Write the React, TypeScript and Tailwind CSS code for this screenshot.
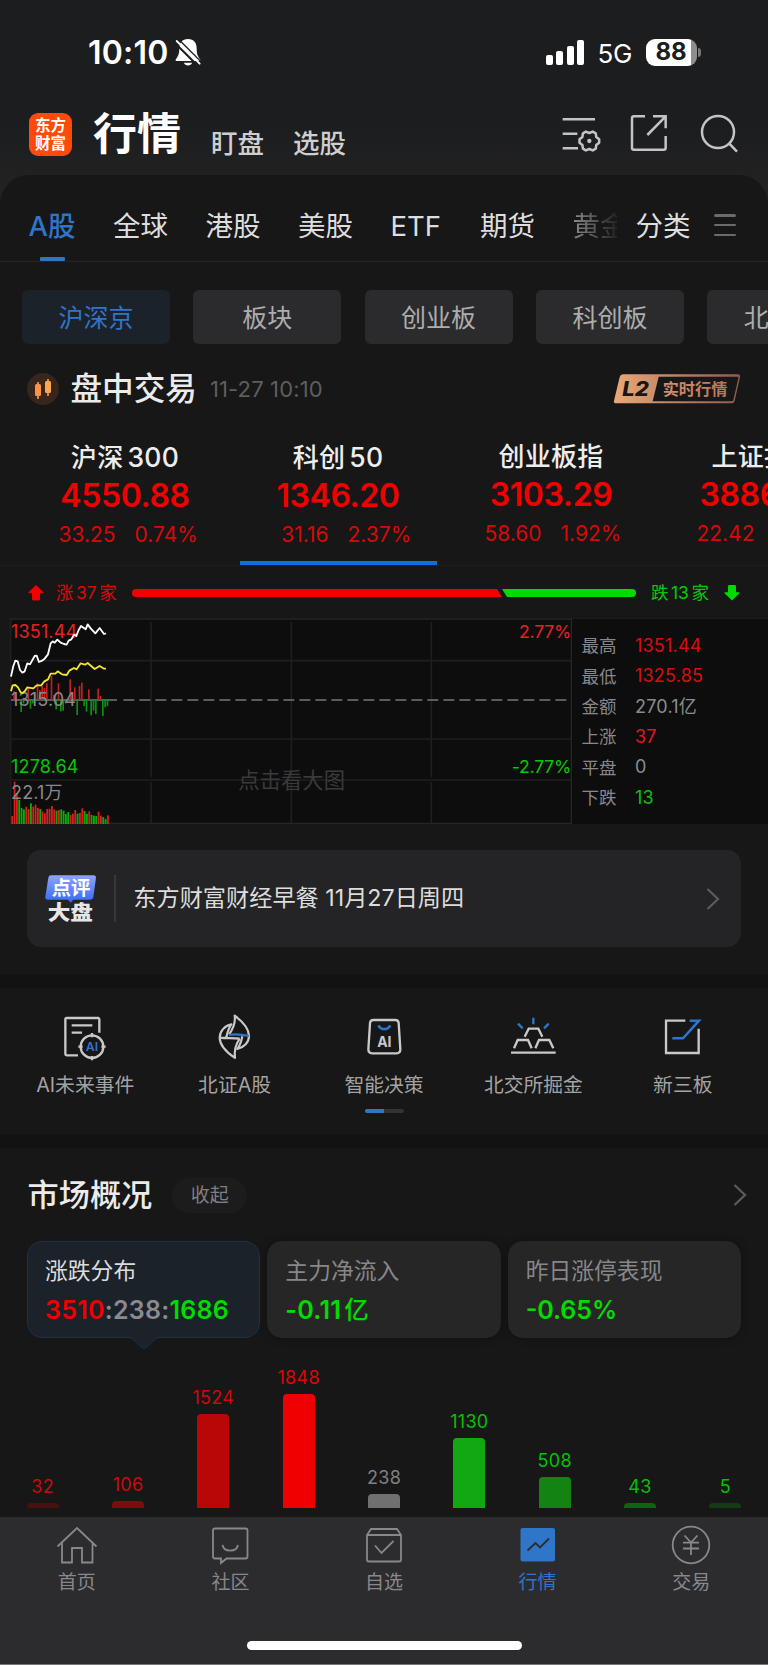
import React from 'react';
import { clsx } from 'clsx';

const tabs = ['全球', '港股', '美股', 'ETF', '期货'];

const boards = ['沪深京', '板块', '创业板', '科创板', '北交所'];

const indices = [
  { name: '沪深', num: '300', value: '4550.88', change: '33.25', pct: '0.74%' },
  { name: '科创', num: '50', value: '1346.20', change: '31.16', pct: '2.37%' },
  { name: '创业板指', num: '', value: '3103.29', change: '58.60', pct: '1.92%' },
  { name: '上证指数', num: '', value: '3886.60', change: '22.42', pct: '0.58%' },
];

const stats = [
  { label: '最高', value: '1351.44', color: 'text-[#d90d0d]' },
  { label: '最低', value: '1325.85', color: 'text-[#d90d0d]' },
  { label: '金额', value: '270.1亿', color: 'text-[#8b8b90]' },
  { label: '上涨', value: '37', color: 'text-[#e01818]' },
  { label: '平盘', value: '0', color: 'text-[#8b8b90]' },
  { label: '下跌', value: '13', color: 'text-[#06c406]' },
];

const distribution = [
  { count: 32, height: 5, bar: 'bg-[#4a1010]', text: 'text-[#cd0a0a]' },
  { count: 106, height: 7, bar: 'bg-[#7d0c0c]', text: 'text-[#cd0a0a]' },
  { count: 1524, height: 94, bar: 'bg-[#b90606]', text: 'text-[#cd0a0a]' },
  { count: 1848, height: 114, bar: 'bg-[#f00000]', text: 'text-[#dc0606]' },
  { count: 238, height: 14, bar: 'bg-[#707070]', text: 'text-[#808085]' },
  { count: 1130, height: 70, bar: 'bg-[#12a812]', text: 'text-[#06c006]' },
  { count: 508, height: 31, bar: 'bg-[#138413]', text: 'text-[#06c006]' },
  { count: 43, height: 5, bar: 'bg-[#146014]', text: 'text-[#06c006]' },
  { count: 5, height: 5, bar: 'bg-[#153b15]', text: 'text-[#06c006]' },
];

// [x, height], positive is up and negative is down
const momentum = [
  [42, 26], [63, -36], [70, -10], [84, 34], [91, -26], [98, -10], [105, 22], [112, 50], [119, 30], [126, 42],
  [133, 36], [140, 50], [154, 72], [161, 15], [168, -28], [175, 50], [182, -34], [189, -32], [196, -10],
  [210, 62], [217, 22], [224, 38], [231, -45], [238, 42], [245, 52], [252, -18], [259, -35], [266, 32],
  [273, -46], [280, -32], [287, -42], [294, 34], [301, 12], [308, -48], [315, -22], [322, -18],
];

const volumes = [
  24, 127, 92, -72, -48, -44, 52, 45, -62, 52, 58, 48, -45, 37, 32, 45, 46, 54, 44, -40, 42,
  -44, -40, -30, -36, 27, 31, 42, -31, 33, 47, -39, -30, 38, -27, -25, -24, 37, 25, -21, -15, 26,
];

const priceLine =
  '33,200 40,168 46,152 53,154 60,180 67,188 74,184 82,160 90,163 104,138 110,137 117,156 126,152 134,146 144,133 152,100 158,94 164,98 172,89 182,98 192,102 200,104 206,92 214,88 222,74 229,78 236,60 243,48 257,58 263,43 272,55 286,70 299,54 312,72 318,70';

const averageLine =
  '33,244 38,226 46,225 54,232 62,247 68,249 75,243 82,232 100,235 110,226 124,226 132,215 144,208 152,191 166,191 173,184 186,193 200,195 208,182 222,174 230,178 242,160 255,164 263,159 284,177 299,168 312,176 318,176';

const StatusBar = () => (
  <div className="flex h-[104px] items-center pl-[88px] pr-[67px]">
    <span className="w-[80px] pt-[2px] text-[32px] font-semibold leading-none tracking-[0.2px] text-white">10:10</span>
    <svg viewBox="0 0 84 92" className="ml-[6px] h-[30.7px] w-[28px]">
      <path
        d="M42 6C24 6 16 18 16 34c0 18-4 24-11 34q-2 4 3 4h68q5 0 3-4C71 58 68 52 68 34 68 18 60 6 42 6ZM30 77h24c-2 11-22 11-24 0Z"
        fill="#fff"
      />
      <path d="M2 17 72 87" stroke="#1c1d1f" strokeWidth="6" />
      <path d="M13 6 83 76" stroke="#1c1d1f" strokeWidth="4" />
      <path d="M8 12 77 80" stroke="#fff" strokeWidth="5.5" strokeLinecap="round" />
    </svg>
    <div className="ml-auto flex items-center">
      <div className="flex h-[25px] w-[39px] items-end justify-between">
        <i className="h-[10px] w-[7px] rounded-[2px] bg-white" />
        <i className="h-[14px] w-[7px] rounded-[2px] bg-white" />
        <i className="h-[19px] w-[7px] rounded-[2px] bg-white" />
        <i className="h-[25px] w-[7px] rounded-[2px] bg-white" />
      </div>
      <span className="ml-[13px] w-[35px] pt-[3px] text-[26px] leading-none tracking-[-0.3px] text-white">5G</span>
      <div className="ml-[13px] flex h-[27px] w-[51px] items-center justify-center rounded-[9px] bg-[linear-gradient(90deg,#fff_88%,#8e8e8f_88%)]">
        <span className="text-[24px] font-bold leading-none text-[#1c1d1f]">88</span>
      </div>
      <i className="ml-[1.5px] h-[9px] w-[3px] rounded-r-full bg-[#77787a]" />
    </div>
  </div>
);

const Header = () => (
  <div className="flex h-[71px] items-start pl-[29px] pr-[30px]">
    <div className="mt-[9px] flex h-[43px] w-[43px] flex-col items-center justify-center rounded-[9px] bg-[#ff4a08] text-[15.5px] font-bold leading-[17.5px] text-white">
      <span>东方</span>
      <span>财富</span>
    </div>
    <h1 className="ml-[21px] mt-[8px] text-[44px] font-bold leading-[44px] text-white">行情</h1>
    <span className="ml-[30px] mt-[26px] text-[26.5px] font-medium leading-[26px] text-[#cfcfcf]">盯盘</span>
    <span className="ml-[29px] mt-[26px] text-[26.5px] font-medium leading-[26px] text-[#cfcfcf]">选股</span>
    <div className="ml-auto mt-[9px] flex">
      <svg viewBox="0 0 120 120" className="h-[40px] w-[40px]" fill="none" stroke="#c4c4c4" strokeWidth="7.5">
        <path d="M5 19h97M5 62h44M5 106h46" />
        <path
          strokeLinejoin="round"
          d="M114.5 78.8v10.4L105.8 96l-1.5 11-9 5.2L85 108l-10.3 4.2-9-5.2-1.5-11-8.7-6.8V78.8l8.7-6.8 1.5-11 9-5.2L85 60l10.3-4.2 9 5.2 1.5 11Z"
        />
        <circle cx="85" cy="84" r="6.5" fill="#c4c4c4" stroke="none" />
      </svg>
      <svg viewBox="0 0 120 120" className="ml-[28px] h-[40px] w-[40px]" fill="none" stroke="#c4c4c4" strokeWidth="7.5">
        <path d="M48 10H15q-6 0-6 6v88q0 6 6 6h89q6 0 6-6V69" />
        <path d="M72 10h38v36M110 10 55 66" />
      </svg>
      <svg viewBox="0 0 120 120" className="ml-[29px] mr-[0.5px] h-[40px] w-[40px]" fill="none" stroke="#c4c4c4" strokeWidth="7.5">
        <circle cx="60" cy="57" r="48" />
        <path d="m94 92 23 24" />
      </svg>
    </div>
  </div>
);

const MarketTabs = () => (
  <div className="flex h-[87px] items-start border-b border-[#242424] pl-[28.5px] pr-[32px] pt-[37px] text-[27.5px] leading-[28px] text-[#dedede]">
    <div className="flex w-[47px] flex-col items-center whitespace-nowrap font-medium text-[#2f75c8]">
      A股
      <i className="mt-[17px] h-[4px] w-[25px] rounded-[1px] bg-[#2f75c8]" />
    </div>
    {tabs.map((tab) => (
      <span key={tab} className={clsx('ml-[37.5px] shrink-0', tab === 'ETF' && 'w-[52px]')}>
        {tab}
      </span>
    ))}
    <span className="ml-[37.5px] w-[44px] overflow-hidden whitespace-nowrap bg-gradient-to-r from-[#8c8c8c] to-[#242424] bg-clip-text text-transparent">
      黄金
    </span>
    <span className="ml-[19px] shrink-0">分类</span>
    <div className="ml-auto mt-[2px] flex h-[22px] w-[22px] flex-col justify-between">
      <i className="h-[2.5px] rounded bg-[#6b6b6b]" />
      <i className="h-[2.5px] rounded bg-[#6b6b6b]" />
      <i className="h-[2.5px] rounded bg-[#6b6b6b]" />
    </div>
  </div>
);

const LevelBadge = () => (
  <svg viewBox="0 0 386 95" className="ml-auto h-[31.7px] w-[128.7px]">
    <defs>
      <linearGradient id="copper" x1="0" x2="1">
        <stop offset="0" stopColor="#eaa878" />
        <stop offset="1" stopColor="#8f5a4c" />
      </linearGradient>
      <linearGradient id="copperText" x1="0" x2="1">
        <stop offset="0" stopColor="#d3906d" />
        <stop offset="1" stopColor="#b57560" />
      </linearGradient>
    </defs>
    <path d="M30 4h344q9 0 7 8l-16 71q-2 8-10 8H10q-9 0-7-8l17-71q2-8 10-8Z" fill="url(#copper)" />
    <path d="M137 11h236q4 0 3 4l-15 66q-1 4-5 4H119Z" fill="#171717" />
    <text x="28" y="70" textLength="80" lengthAdjust="spacingAndGlyphs" fontSize="59" fontWeight="800" fontStyle="italic" fill="#171717">
      L2
    </text>
    <text x="149" y="65" fontSize="48.5" fontWeight="700" fill="url(#copperText)">
      实时行情
    </text>
  </svg>
);

const IndexStrip = () => (
  <div className="flex h-[148px] overflow-hidden border-b border-[#1e1e1e] pl-[18.5px]">
    {indices.map((item, i) => (
      <div key={item.value} className="relative flex w-[213px] shrink-0 flex-col items-center whitespace-nowrap">
        <div className="mt-[26px] text-[26px] font-medium leading-[26px] tracking-[0.3px] text-[#ededed]">
          {item.name}
          {item.num && <span className="ml-[4px] text-[26.5px]">{item.num}</span>}
        </div>
        <div className="mt-[9px] text-[32px] font-semibold leading-[32px] tracking-[-0.4px] text-[#f20000]">{item.value}</div>
        <div className="mt-[12px] grid w-full grid-cols-2 gap-[19px] text-[21px] leading-[22px] text-[#d60909]">
          <span className="text-right">{item.change}</span>
          <span>{item.pct}</span>
        </div>
        {i === 1 && <i className="absolute bottom-0 h-[4px] w-[197px] bg-[#0873dd]" />}
      </div>
    ))}
  </div>
);

const Breadth = () => (
  <div className="flex h-[52px] items-center pl-[28px] pr-[28px] pt-[1px] text-[17.5px] leading-none">
    <svg viewBox="0 0 16 16" className="h-[16px] w-[16px]" fill="#f20000">
      <path d="M8 0l7.5 7.3q.6 1-.6 1H12V14q0 1.400-1.400 1.400H5.400Q4 15.400 4 14V8.300H1.100q-1.200 0-.6-1Z" />
    </svg>
    <span className="ml-[12px] w-[64px] whitespace-nowrap text-[#dc0808]">
      涨<span className="mx-[2.5px]">37</span>家
    </span>
    <svg viewBox="0 0 504 8" className="ml-[12px] h-[8px] w-[504px]">
      <path d="M4 0h361l5 8H4a4 4 0 0 1 0-8Z" fill="#f20000" />
      <path d="M370 0h130a4 4 0 0 1 0 8H375Z" fill="#00dc00" />
    </svg>
    <span className="ml-[15px] whitespace-nowrap text-[#06c806]">
      跌<span className="mx-[2.5px]">13</span>家
    </span>
    <svg viewBox="0 0 16 16" className="ml-auto h-[16px] w-[16px]" fill="#00dc00">
      <path d="M8 15.500l7.500-7.300q.6-1-.6-1H12V1.400Q12 0 10.600 0H5.400Q4 0 4 1.400V7.200H1.100q-1.200 0-.6 1Z" />
    </svg>
  </div>
);

const IntradayChart = () => (
  <div className="flex h-[206px] pl-[10px]">
    <svg viewBox="30 24 1686 618" className="h-[206px] w-[562px] bg-[#0d0d0d]">
      <path d="M32 24v618M453 36v466M453 516v126M874 36v466M874 516v126M1294 36v466M1294 516v126" stroke="#1f1f1f" strokeWidth="5" />
      <path d="M30 152h1686M30 387h1686M30 510h1686" stroke="#1f1f1f" strokeWidth="5" />
      <path d="M30 27h1684v613H30" fill="none" stroke="#262626" strokeWidth="4" />
      <path d="M33 270h318" stroke="#77777a" strokeWidth="4" />
      <path d="M370 270h1340" stroke="#77777a" strokeWidth="4" strokeDasharray="33 15" />
      {momentum.map(([x, h]) => (
        <rect key={x} x={x - 2} y={h > 0 ? 270 - h : 270} width="5" height={Math.abs(h)} fill={h > 0 ? '#c02020' : '#0f8f0f'} />
      ))}
      {volumes.map((h, i) => (
        <rect key={i} x={34 + i * 7} y={642 - Math.abs(h)} width="5.5" height={Math.abs(h)} fill={h > 0 ? '#d42020' : '#05b005'} />
      ))}
      <g fontSize="54" letterSpacing="0.5">
        <text x="33" y="83" fill="#e52222">1351.44</text>
        <text x="33" y="287" fill="#88888c">1315.04</text>
        <text x="33" y="490" fill="#06c806">1278.64</text>
        <text x="33" y="568" fill="#88888c">22.1万</text>
      </g>
      <g fontSize="53" letterSpacing="-0.8" textAnchor="end">
        <text x="1713" y="83" fill="#e52222">2.77%</text>
        <text x="1713" y="490" fill="#06c806">-2.77%</text>
      </g>
      <text x="715" y="533" fontSize="64" fill="#3a3a3a">点击看大图</text>
      <polyline points={priceLine} fill="none" stroke="#fff" strokeWidth="5.5" strokeLinejoin="round" />
      <polyline points={averageLine} fill="none" stroke="#f2e530" strokeWidth="5.5" strokeLinejoin="round" />
    </svg>
    <div className="flex flex-1 flex-col border-t border-[#1c1c1c] bg-[#0d0d0d] pl-[9.5px] pt-[12px] text-[18px]">
      {stats.map((row) => (
        <div key={row.label} className="flex h-[30.3px] items-center leading-none">
          <span className="w-[53.5px] text-[17.5px] text-[#87878c]">{row.label}</span>
          <span className={clsx('tracking-[0.2px]', row.color)}>{row.value}</span>
        </div>
      ))}
    </div>
  </div>
);

const Chevron = ({ className }: { className?: string }) => (
  <svg viewBox="0 0 14 24" className={clsx('h-[24px] w-[14px]', className)} fill="none" stroke="#5c5c5e" strokeWidth="2.2">
    <path d="M1.500 2l10.500 10L1.500 22" />
  </svg>
);

const NewsCard = () => (
  <div className="mx-[27px] mt-[26px] flex h-[97px] items-center rounded-[14px] bg-[#242426] pl-[17px] pr-[21px]">
    <svg viewBox="0 0 160 155" className="h-[51.7px] w-[53.3px]">
      <defs>
        <linearGradient id="review" x1="0" x2="0" y1="0" y2="1">
          <stop offset="0" stopColor="#8fa4f8" />
          <stop offset="1" stopColor="#3468ff" />
        </linearGradient>
      </defs>
      <path d="M22 7h126q9 0 8 8l-8 58q-1 7-9 7H88l-8 9-8-9H12q-9 0-8-8l9-58q1-7 9-7Z" fill="url(#review)" />
      <text x="23" y="65" fontSize="58" fontWeight="700" fill="#fff">点评</text>
      <text x="11" y="142" fontSize="60" fontWeight="900" textLength="136" lengthAdjust="spacingAndGlyphs" fill="#e6e6e6">大盘</text>
    </svg>
    <i className="ml-[17px] h-[47px] w-[1.5px] bg-[#38383a]" />
    <span className="ml-[17.5px] whitespace-nowrap text-[23.2px] leading-none text-[#dcdcdc]">东方财富财经早餐 11月27日周四</span>
    <Chevron className="ml-auto" />
  </div>
);

const shortcuts = [
  {
    label: 'AI未来事件',
    icon: (
      <svg viewBox="0 0 140 145" className="h-[48.3px] w-[46.7px]" fill="none" stroke="#c9c9c9" strokeWidth="7">
        <path d="M112 56V16q0-4-4-4H14q-4 0-4 4v104q0 4 4 4h34M29 34h62M29 56h31" />
        <circle cx="90" cy="98" r="34" />
        <path d="M90 57v13M90 126v13M49 98h13M118 98h13" />
        <text x="90" y="111" fontSize="37" fontWeight="600" textAnchor="middle" fill="#2f75c8" stroke="none">AI</text>
      </svg>
    ),
  },
  {
    label: '北证A股',
    icon: (
      <svg viewBox="-16 0 140 145" className="h-[48.3px] w-[46.7px]" fill="none" stroke="#c9c9c9" strokeWidth="6.5" strokeLinejoin="round">
        <path d="M38 62C50 45 58 25 55 5c20 15 43 35 43 61 0 19-15 35-35 39 8-10 12-23 15-38" />
        <path d="M70 74C58 92 53 112 56 132 34 117 10 97 10 71c0-19 15-36 35-40-8 11-12 24-15 39M10 71c22 3 40 0 60 3" />
        <path d="M38 63c22-5 42-1 60 3" stroke="#2f75c8" />
      </svg>
    ),
  },
  {
    label: '智能决策',
    icon: (
      <svg viewBox="-10 -5 140 145" className="h-[48.3px] w-[46.7px]" fill="none" stroke="#c9c9c9" strokeWidth="7">
        <path d="M27 13h66q9 0 10 9l5 79q0 12-11 12H23q-11 0-11-12l5-79q1-9 10-9Z" />
        <path d="M42 29c8 15 28 15 36 0" stroke="#2f75c8" strokeWidth="7.5" />
        <text x="60" y="95" fontSize="42" fontWeight="700" textAnchor="middle" fill="#c9c9c9" stroke="none">AI</text>
      </svg>
    ),
  },
  {
    label: '北交所掘金',
    icon: (
      <svg viewBox="5 -5 140 145" className="h-[48.3px] w-[46.7px]" fill="none" stroke="#c9c9c9" strokeWidth="7">
        <path d="m49 63 12-24h29l12 24M17 98l11-25h31l11 25M81 98l11-25h31l12 25M8 111h134" />
        <path d="M75 6v20M29 24l14 14M121 24l-14 14" stroke="#2f75c8" />
      </svg>
    ),
  },
  {
    label: '新三板',
    icon: (
      <svg viewBox="-10 -5 140 145" className="h-[48.3px] w-[46.7px]" fill="none" stroke="#c9c9c9" strokeWidth="7">
        <path d="M69 15H11v97h98V39" />
        <path d="M82 15h28L62 68H30" stroke="#2f75c8" strokeWidth="7.5" />
      </svg>
    ),
  },
];

const Shortcuts = () => (
  <div className="flex h-[146px] flex-col items-center bg-[#171717]">
    <div className="grid w-[747px] grid-cols-5 pt-[25.5px]">
      {shortcuts.map((item) => (
        <div key={item.label} className="flex flex-col items-center">
          {item.icon}
          <span className="mt-[13.5px] whitespace-nowrap text-[19.8px] leading-[20px] text-[#a3a3a3]">{item.label}</span>
        </div>
      ))}
    </div>
    <div className="mt-[14px] flex h-[4px] w-[39px] overflow-hidden rounded-full bg-[#333]">
      <i className="w-1/2 bg-[#2f75c8]" />
    </div>
  </div>
);

const Overview = () => (
  <div className="h-[369px] bg-[#171717]">
    <div className="flex h-[93px] items-center pl-[27.5px] pr-[21px] pt-[1.5px]">
      <h2 className="text-[31.2px] font-medium leading-none text-[#ebebeb]">市场概况</h2>
      <span className="ml-[20px] flex h-[35px] w-[75px] items-center justify-center rounded-full bg-[#1c1c1c] text-[19px] leading-none text-[#7f7f84]">
        收起
      </span>
      <Chevron className="ml-auto" />
    </div>
    <div className="grid h-[97px] grid-cols-3 gap-[7px] px-[27px] text-[22.8px] leading-[24px]">
      <div className="relative rounded-[15px] border border-[#1d3047] bg-[#1b222a] pl-[17px] pt-[17px]">
        <div className="text-[#dcdcdc]">涨跌分布</div>
        <div className="mt-[15px] whitespace-nowrap text-[25px] font-semibold tracking-[0.25px]">
          <span className="text-[#f20000]">3510</span>
          <span className="text-[#8a8a90]">:238:</span>
          <span className="text-[#00dc00]">1686</span>
        </div>
        <svg viewBox="0 0 28 13" className="absolute left-[102px] top-[94px] h-[13px] w-[28px]">
          <path d="M0 1h28L16 11.500q-2 1.500-4 0Z" fill="#1b222a" />
          <path d="M0 1l12 10.500q2 1.500 4 0L28 1" fill="none" stroke="#1d3047" />
        </svg>
      </div>
      <div className="rounded-[15px] bg-[#262626] pl-[18px] pt-[18px] shadow-[0_0_8px_rgba(0,0,0,0.35)]">
        <div className="text-[#87878a]">主力净流入</div>
        <div className="mt-[15px] whitespace-nowrap text-[25px] font-semibold tracking-[0.3px] text-[#00dc00]">
          -0.11<span className="ml-[3px] text-[24.5px] font-medium">亿</span>
        </div>
      </div>
      <div className="rounded-[15px] bg-[#262626] pl-[18px] pt-[18px] shadow-[0_0_8px_rgba(0,0,0,0.35)]">
        <div className="text-[#87878a]">昨日涨停表现</div>
        <div className="mt-[15px] whitespace-nowrap text-[25px] font-semibold text-[#00dc00]">-0.65%</div>
      </div>
    </div>
    <div className="flex h-[170px] items-end justify-between px-[26.7px]">
      {distribution.map((item) => (
        <div key={item.count} className="flex w-[32px] flex-col items-center">
          <span className={clsx('mb-[7.5px] text-[18px] leading-[18px] tracking-[0.3px]', item.text)}>{item.count}</span>
          <i className={clsx('w-full rounded-t-[4px]', item.bar)} style={{ height: item.height }} />
        </div>
      ))}
    </div>
  </div>
);

const navItems = [
  { label: '首页', icon: <path d="M2.500 23.500 22 5l19.500 18.500M7 20v19.500h10V25h10v14.500h10.500V20" /> },
  {
    label: '社区',
    icon: <path d="M7 5.500h30.500q2 0 2 2v26q0 2-2 2h-19L13 40v-4.500H7q-2 0-2-2v-26q0-2 2-2ZM14.500 22c1.500 7.500 14 7.500 15.500 0" />,
  },
  {
    label: '自选',
    icon: <path d="M5 12v24.500q0 2 2 2h30q2 0 2-2V12L35 6H9ZM5 12h34M13 22.500l6.500 7.500L31.500 18" />,
  },
  {
    label: '行情',
    active: true,
    icon: (
      <>
        <rect x="4.5" y="5" width="34.5" height="33.5" rx="2" fill="#2f75c8" stroke="none" />
        <path d="m11.500 27.500 8-7.500 4.500 4.500 9-9" stroke="#2c2c2e" />
      </>
    ),
  },
  {
    label: '交易',
    icon: (
      <>
        <circle cx="22" cy="22" r="18.3" />
        <path d="m15.500 12.500 6.500 7 6.500-7M22 19.500V32M14 19.700h16M14 25.500h16" />
      </>
    ),
  },
];

const BottomNav = () => (
  <nav className="h-[148px] border-b border-[#77777a] bg-[#2c2c2e]">
    <div className="grid h-[124px] grid-cols-5 content-start pt-[6px]">
      {navItems.map((item) => (
        <div key={item.label} className="flex flex-col items-center">
          <svg viewBox="0 0 44 44" className="h-[44px] w-[44px]" fill="none" stroke="#88888c" strokeWidth="1.8">
            {item.icon}
          </svg>
          <span className={clsx('mt-[6px] text-[19px] leading-[20px]', item.active ? 'text-[#2f75c8]' : 'text-[#88888c]')}>
            {item.label}
          </span>
        </div>
      ))}
    </div>
    <div className="mx-auto h-[9px] w-[275px] rounded-full bg-white" />
  </nav>
);

export default function App() {
  return (
    <div className="h-[1665px] w-[768px] overflow-hidden bg-[#121212] font-['Inter','Noto_Sans_CJK_SC',sans-serif]">
      <div className="h-[204px] bg-gradient-to-b from-[#1c1d1f] from-60% to-[#232323]">
        <StatusBar />
        <Header />
      </div>
      <div className="-mt-[29px] rounded-t-[29px] bg-[#171717]">
        <MarketTabs />
        <div className="flex gap-[23.3px] overflow-hidden pl-[22px] pt-[28px]">
          {boards.map((board, i) => (
            <div
              key={board}
              className={clsx(
                'flex h-[54px] w-[148px] shrink-0 items-center justify-center rounded-[6px] pt-[2px] text-[25px] leading-none',
                i === 0 ? 'bg-[#1b222a] text-[#2f75c8]' : 'bg-[#2b2b2d] text-[#adadad]'
              )}
            >
              {board}
            </div>
          ))}
        </div>
        <div className="flex h-[74px] items-center pb-[1px] pl-[27px] pr-[26px] pt-[16px]">
          <svg viewBox="0 0 32 32" className="h-[32px] w-[32px]">
            <circle cx="16" cy="16" r="16" fill="#38261d" />
            <path d="M11 9v17M21 6v17" stroke="#ff9d4a" strokeWidth="1.6" />
            <rect x="8" y="11" width="6" height="12" rx="1.5" fill="#ff9147" />
            <rect x="18" y="8" width="6" height="12" rx="1.5" fill="#ffa64d" />
          </svg>
          <h2 className="ml-[11.5px] text-[31.6px] font-medium leading-none text-[#ebebeb]">盘中交易</h2>
          <span className="ml-[13px] text-[22px] leading-none tracking-[0.15px] text-[#5e5e60]">11-27 10:10</span>
          <LevelBadge />
        </div>
        <IndexStrip />
        <Breadth />
        <IntradayChart />
        <div className="h-[150px] overflow-hidden">
          <NewsCard />
        </div>
      </div>
      <div className="h-[14px]" />
      <Shortcuts />
      <div className="h-[14px]" />
      <Overview />
      <BottomNav />
    </div>
  );
}
